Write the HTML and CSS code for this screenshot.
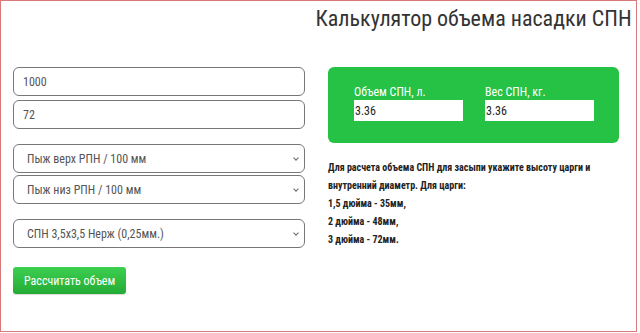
FILE: index.html
```html
<!DOCTYPE html>
<html lang="ru">
<head>
  <meta charset="UTF-8">
  <title>Калькулятор объема насадки СПН</title>
  <link rel="stylesheet" href="styles.css">
</head>
<body>

  <div class="frame">
    <div class="page">
      <div class="title-row">
        <h1>Калькулятор объема насадки СПН</h1>
      </div>

      <form class="calc-form">
        <input class="field" type="text" name="height" value="1000">
        <input class="field field-last" type="text" name="diameter" value="72">

        <div class="select-box">
          <select name="top">
            <option>Пыж верх РПН / 100 мм</option>
          </select>
        </div>
        <div class="select-box select-last">
          <select name="bottom">
            <option>Пыж низ РПН / 100 мм</option>
          </select>
        </div>
        <div class="select-box select-last">
          <select name="type">
            <option>СПН 3,5х3,5 Нерж (0,25мм.)</option>
          </select>
        </div>

        <button type="button">Рассчитать объем</button>
      </form>

      <div class="side">
        <div class="result-box">
          <label>Объем СПН, л.
            <input type="text" value="3.36" readonly>
          </label>
          <label>Вес СПН, кг.
            <input type="text" value="3.36" readonly>
          </label>
        </div>

        <div class="hint">
          <p>Для расчета объема СПН для засыпи укажите высоту царги и внутренний диаметр. Для царги:</p>
          <p>1,5 дюйма - 35мм,</p>
          <p>2 дюйма - 48мм,</p>
          <p>3 дюйма - 72мм.</p>
        </div>
      </div>
    </div>
  </div>

</body>
</html>
```

FILE: styles.css
```css
* { box-sizing: border-box; }
body { margin: 0; font-family: Roboto, "Liberation Sans", sans-serif; font-stretch: condensed; background: #fff; color: #333; }
input, select, button { font-family: inherit; font-stretch: condensed; }

.frame { width: 637px; height: 332px; border: 1px solid #d8797b; overflow: hidden; }
.page { display: grid; grid-template-columns: 292px 291px; column-gap: 23px; padding-left: 12px; }

.title-row { grid-column: 2; display: flex; justify-content: center; height: 66px; }
h1 { margin: 5px 0 0; font-size: 22px; font-weight: 400; line-height: 26px; color: #333; white-space: nowrap; }

.calc-form { grid-column: 1; display: flex; flex-direction: column; align-items: flex-start; }
.field { width: 292px; height: 29px; border: 1px solid #777; border-radius: 6px; padding: 0 9px; font-size: 12px; color: #555; margin-bottom: 4px; }
.field-last { margin-bottom: 15px; }

.select-box { position: relative; width: 292px; margin-bottom: 2px; }
.select-last { margin-bottom: 15px; }
select { display: block; width: 100%; height: 29px; border: 1px solid #777; border-radius: 6px; padding: 0 13px; font-size: 12px; color: #555; background: #fff; appearance: none; }
.select-box::after { content: ""; position: absolute; right: 7px; top: 12px; width: 3px; height: 3px; border-right: 1px solid #666; border-bottom: 1px solid #666; transform: rotate(45deg); pointer-events: none; }

button { margin-top: 4px; height: 27px; padding: 0 11px; border: none; border-radius: 3px; background: linear-gradient(#3dcf50, #23ab36); color: #fff; font-size: 12px; cursor: pointer; box-shadow: 0 1px 1px rgba(0,0,0,0.15); }

.side { grid-column: 2; grid-row: 2; }
.result-box { height: 76px; background: #25c245; border-radius: 6px; padding: 18px 26px 0; display: flex; gap: 22px; }
.result-box label { display: flex; flex-direction: column; gap: 1px; color: #fff; font-size: 12px; line-height: 14px; }
.result-box input { width: 109px; height: 21px; border: none; padding: 0 1px; font-size: 12px; color: #222; }

.hint { margin-top: 16px; font-size: 10px; font-weight: 700; color: #222; line-height: 18px; }
.hint p { margin: 0; }
```
